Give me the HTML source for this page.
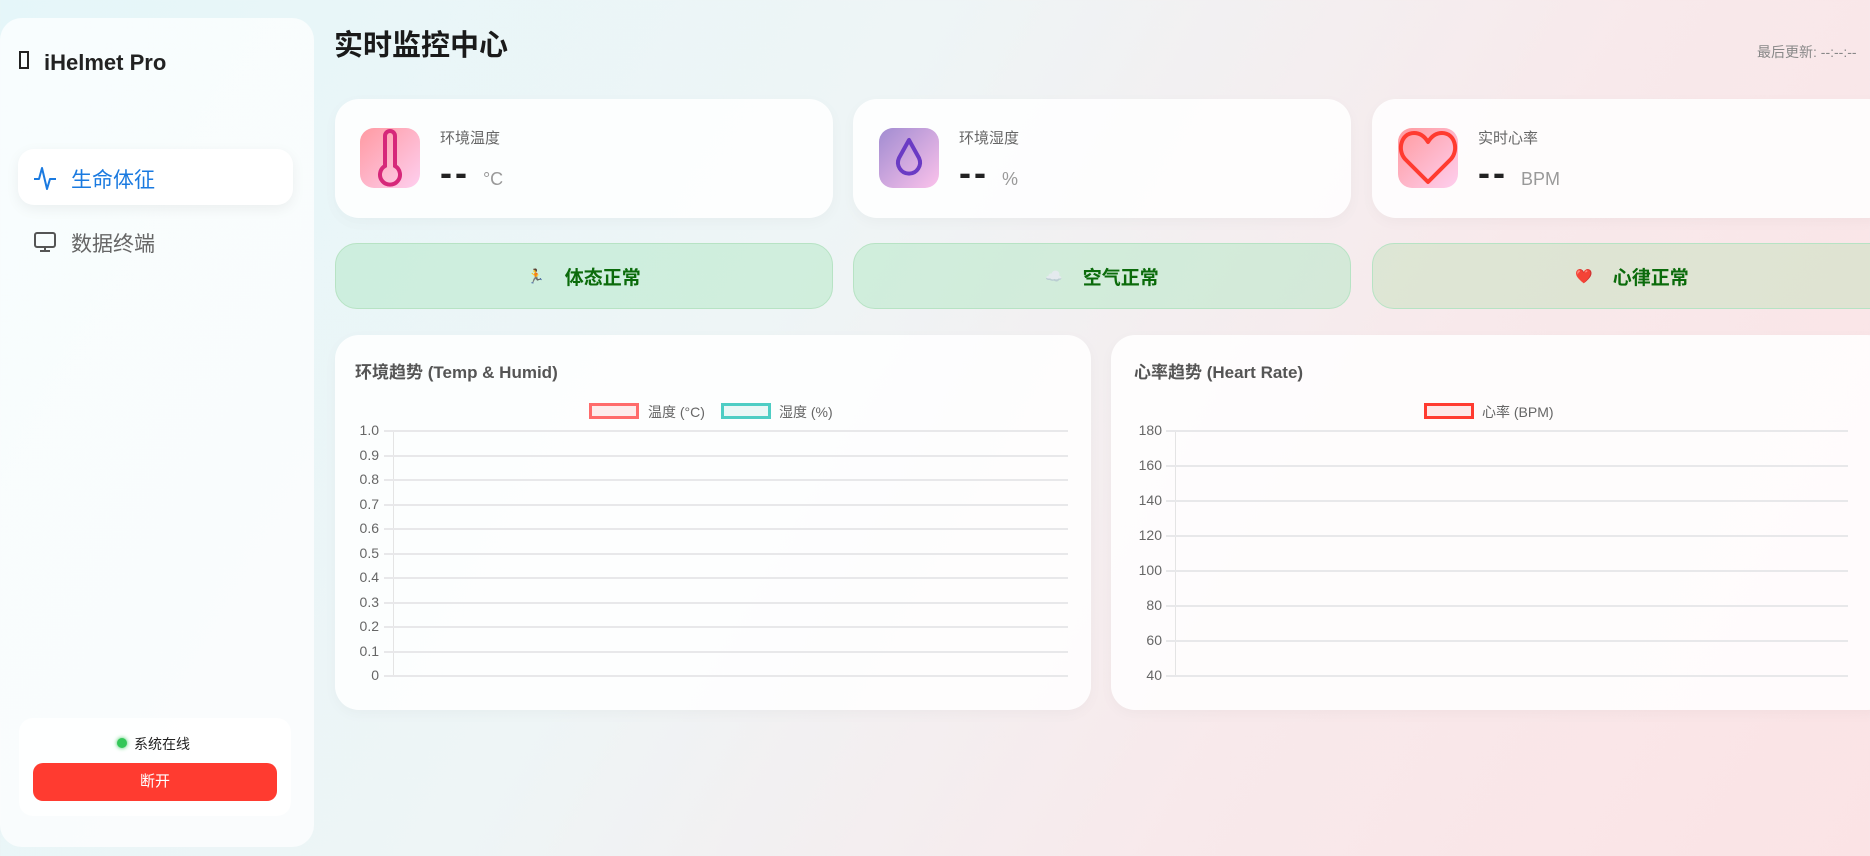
<!DOCTYPE html>
<html><head><meta charset="utf-8"><style>
*{margin:0;padding:0;box-sizing:border-box}
body{width:1870px;height:856px;overflow:hidden;position:relative;font-family:"Liberation Sans","Noto Sans CJK SC",sans-serif;background:linear-gradient(120deg,#e5f6f9 0%,#eef5f6 40%,#f8e9eb 70%,#fbe3e5 100%)}
.a{position:absolute}
.side{left:0;top:18px;width:314px;height:829px;background:rgba(255,255,255,0.72);border-radius:22px}
.card{background:rgba(255,255,255,0.85);border-radius:24px;box-shadow:0 4px 14px rgba(0,0,0,0.03)}
.ico{width:60px;height:60px;border-radius:14px}
.lbl{font-size:15px;color:#666}
.val{font-size:36px;font-weight:900;color:#222;letter-spacing:3px;line-height:40px}
.unit{font-size:18px;color:#999;font-weight:normal;letter-spacing:0}
.st{height:66px;border-radius:22px;border:1px solid #b7e3c4;background:rgba(170,230,190,0.45);display:flex;align-items:center;justify-content:center;font-size:19px;font-weight:bold;color:#0b6b0b}
.st span.e{font-size:14px;margin-right:20px}
.ct{font-size:17px;font-weight:bold;color:#555}
.ax{font-size:14px;color:#666;text-align:right;width:40px}
.gl{height:2px;background:#e8e8ea}
.lg{font-size:14px;color:#666}
.box{width:50px;height:16px;border:3px solid}
</style></head><body>
<div class="a side"></div>
<div class="a" style="left:19px;top:51px;width:10px;height:18px;border:2px solid #222"></div>
<div class="a" style="left:44px;top:50px;font-size:22px;font-weight:bold;color:#222">iHelmet Pro</div>
<div class="a" style="left:18px;top:149px;width:275px;height:56px;background:#fff;border-radius:16px;box-shadow:0 4px 14px rgba(0,0,0,0.06)"></div>
<svg class="a" style="left:33px;top:165px" width="24" height="26" viewBox="0 0 24 26"><path d="M1 14h5l3-11 5 21 3-10h6" fill="none" stroke="#1a7ae0" stroke-width="2" stroke-linejoin="round"/></svg>
<div class="a" style="left:71px;top:164px;font-size:21px;color:#1a7ae0">生命体征</div>
<svg class="a" style="left:33px;top:230px" width="24" height="24" viewBox="0 0 24 24"><rect x="2" y="3" width="20" height="14" rx="2" fill="none" stroke="#555" stroke-width="2"/><path d="M12 17v4M7 21h10" stroke="#555" stroke-width="2"/></svg>
<div class="a" style="left:71px;top:228px;font-size:21px;color:#666">数据终端</div>
<div class="a" style="left:19px;top:718px;width:272px;height:98px;background:rgba(255,255,255,0.85);border-radius:14px"></div>
<div class="a" style="left:117px;top:738px;width:10px;height:10px;border-radius:50%;background:#34c759;box-shadow:0 0 4px #34c759"></div>
<div class="a" style="left:134px;top:734px;font-size:14px;color:#222">系统在线</div>
<div class="a" style="left:33px;top:763px;width:244px;height:38px;background:#ff3b30;border-radius:10px;color:#fff;font-size:15px;text-align:center;line-height:38px">断开</div>

<div class="a" style="left:334px;top:22px;font-size:29px;font-weight:bold;color:#1a1a1a">实时监控中心</div>
<div class="a" style="left:1757px;top:42px;font-size:14px;color:#888;white-space:nowrap">最后更新: --:--:--</div>

<div class="a card" style="left:335px;top:99px;width:498px;height:119px"></div>
<div class="a card" style="left:853px;top:99px;width:498px;height:119px"></div>
<div class="a card" style="left:1372px;top:99px;width:520px;height:119px"></div>

<div class="a ico" style="left:360px;top:128px;background:linear-gradient(135deg,#ff9aa2,#fecfef)"><svg width="60" height="60" viewBox="0 0 60 60"><path d="M25 8a5 5 0 0 1 10 0v30a10 10 0 1 1-10 0z" fill="none" stroke="#d6287a" stroke-width="4"/></svg></div>
<div class="a ico" style="left:879px;top:128px;background:linear-gradient(135deg,#a18cd1,#fbc2eb)"><svg width="60" height="60" viewBox="0 0 60 60"><path d="M30 12L20 30a11 11 0 1 0 20 0z" fill="none" stroke="#6a3bc4" stroke-width="4" stroke-linejoin="round"/></svg></div>
<div class="a ico" style="left:1398px;top:128px;background:linear-gradient(135deg,#ff9a9e,#fecfef)"><svg width="60" height="60" viewBox="0 0 60 60"><path d="M30 54L7 31C-1 22 3 5 16 5c7 0 11 4 14 9 3-5 7-9 14-9 13 0 17 17 9 26z" fill="none" stroke="#ff3b30" stroke-width="4" stroke-linejoin="round"/></svg></div>

<div class="a lbl" style="left:440px;top:127px">环境温度</div>
<div class="a val" style="left:440px;top:153px">-- <span class="unit">°C</span></div>
<div class="a lbl" style="left:959px;top:127px">环境湿度</div>
<div class="a val" style="left:959px;top:153px">-- <span class="unit">%</span></div>
<div class="a lbl" style="left:1478px;top:127px">实时心率</div>
<div class="a val" style="left:1478px;top:153px">-- <span class="unit">BPM</span></div>

<div class="a st" style="left:335px;top:243px;width:498px"><span class="e">🏃</span>体态正常</div>
<div class="a st" style="left:853px;top:243px;width:498px"><span class="e">☁️</span>空气正常</div>
<div class="a st" style="left:1372px;top:243px;width:520px;background:rgba(190,225,185,0.45)"><span class="e">❤️</span>心律正常</div>

<div class="a card" style="left:335px;top:335px;width:756px;height:375px"></div>
<div class="a card" style="left:1111px;top:335px;width:780px;height:375px"></div>
<div class="a ct" style="left:355px;top:358px">环境趋势 (Temp &amp; Humid)</div>
<div class="a ct" style="left:1134px;top:358px">心率趋势 (Heart Rate)</div>

<div class="a box" style="left:589px;top:403px;border-color:#ff6b6b;background:#fdecec"></div>
<div class="a lg" style="left:648px;top:402px">温度 (°C)</div>
<div class="a box" style="left:721px;top:403px;border-color:#4ecdc4;background:#eaf7f6"></div>
<div class="a lg" style="left:779px;top:402px">湿度 (%)</div>
<div class="a box" style="left:1424px;top:403px;border-color:#ff3b30;background:#fde8e8"></div>
<div class="a lg" style="left:1482px;top:402px">心率 (BPM)</div>

<div class="a" style="left:393px;top:431px;width:1px;height:246px;background:#e4e4e4"></div>
<div class="a" style="left:1175px;top:431px;width:1px;height:246px;background:#e4e4e4"></div>
<div class="a gl" style="left:384px;top:430px;width:684px"></div><div class="a ax" style="left:339px;top:422px">1.0</div>
<div class="a gl" style="left:384px;top:455px;width:684px"></div><div class="a ax" style="left:339px;top:447px">0.9</div>
<div class="a gl" style="left:384px;top:479px;width:684px"></div><div class="a ax" style="left:339px;top:471px">0.8</div>
<div class="a gl" style="left:384px;top:504px;width:684px"></div><div class="a ax" style="left:339px;top:496px">0.7</div>
<div class="a gl" style="left:384px;top:528px;width:684px"></div><div class="a ax" style="left:339px;top:520px">0.6</div>
<div class="a gl" style="left:384px;top:553px;width:684px"></div><div class="a ax" style="left:339px;top:545px">0.5</div>
<div class="a gl" style="left:384px;top:577px;width:684px"></div><div class="a ax" style="left:339px;top:569px">0.4</div>
<div class="a gl" style="left:384px;top:602px;width:684px"></div><div class="a ax" style="left:339px;top:594px">0.3</div>
<div class="a gl" style="left:384px;top:626px;width:684px"></div><div class="a ax" style="left:339px;top:618px">0.2</div>
<div class="a gl" style="left:384px;top:651px;width:684px"></div><div class="a ax" style="left:339px;top:643px">0.1</div>
<div class="a gl" style="left:384px;top:675px;width:684px"></div><div class="a ax" style="left:339px;top:667px">0</div>
<div class="a gl" style="left:1166px;top:430px;width:682px"></div><div class="a ax" style="left:1122px;top:422px">180</div>
<div class="a gl" style="left:1166px;top:465px;width:682px"></div><div class="a ax" style="left:1122px;top:457px">160</div>
<div class="a gl" style="left:1166px;top:500px;width:682px"></div><div class="a ax" style="left:1122px;top:492px">140</div>
<div class="a gl" style="left:1166px;top:535px;width:682px"></div><div class="a ax" style="left:1122px;top:527px">120</div>
<div class="a gl" style="left:1166px;top:570px;width:682px"></div><div class="a ax" style="left:1122px;top:562px">100</div>
<div class="a gl" style="left:1166px;top:605px;width:682px"></div><div class="a ax" style="left:1122px;top:597px">80</div>
<div class="a gl" style="left:1166px;top:640px;width:682px"></div><div class="a ax" style="left:1122px;top:632px">60</div>
<div class="a gl" style="left:1166px;top:675px;width:682px"></div><div class="a ax" style="left:1122px;top:667px">40</div>
</body></html>
